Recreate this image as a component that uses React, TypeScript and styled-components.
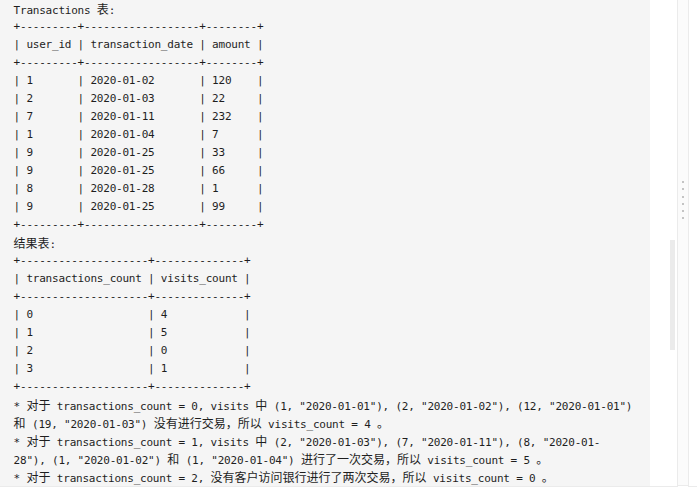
import React from "react";
import styled, { createGlobalStyle } from "styled-components";

const Global = createGlobalStyle`
  html, body { margin: 0; padding: 0; background: #ffffff; }
  #root { width: 697px; height: 488px; overflow: hidden; }
`;

const Page = styled.div`
  display: flex;
  width: 697px;
  height: 488px;
  background: #ffffff;
`;

const LeftPanel = styled.div`
  position: relative;
  display: flex;
  width: 677px;
  height: 486px;
  border-right: 1px solid #ebebeb;
  border-bottom: 1px solid #ebebeb;
  background: #ffffff;
`;

const CodeBlock = styled.pre`
  margin: 0;
  width: 650px;
  height: 486px;
  box-sizing: border-box;
  padding: 0 0 0 13.6px;
  background: #f5f5f5;
  color: #1e1e1e;
  font-family: "DejaVu Sans Mono", "Liberation Mono", monospace;
  font-size: 11px;
  letter-spacing: -0.22px;
  line-height: 18px;
  white-space: pre;
  overflow: hidden;
`;

const Line = styled.div`
  height: 18px;
`;

const Zh = styled.span`
  font-family: "Noto Sans CJK SC", sans-serif;
  font-size: 12px;
  letter-spacing: 0;
  line-height: 18px;
`;

const ScrollThumb = styled.div`
  position: absolute;
  left: 670px;
  top: 240px;
  width: 5px;
  height: 110px;
  background: #ebebeb;
`;

const Gutter = styled.div`
  width: 10px;
  height: 486px;
  display: flex;
  flex-direction: column;
  align-items: center;
  padding-top: 181px;
  box-sizing: border-box;
  gap: 5.3px;
  background: #fbfbfb;
  border-bottom: 1px solid #ebebeb;
`;

const Dot = styled.span`
  width: 2px;
  height: 2px;
  background: #c4c4c4;
`;

const RightPanel = styled.div`
  flex: 1;
  height: 486px;
  border-left: 1px solid #ebebeb;
  border-bottom: 1px solid #ebebeb;
  background: #ffffff;
`;

const CJK = /([\u3000-\u9fff\uff00-\uffef]+)/;

const render = (s: string) =>
  s.split(CJK).map((p, i) =>
    /[\u3000-\u9fff\uff00-\uffef]/.test(p) ? (
      <Zh key={i}>{p}</Zh>
    ) : (
      <React.Fragment key={i}>{p}</React.Fragment>
    )
  );

const lines: string[] = [
  "Transactions 表:",
  "+---------+------------------+--------+",
  "| user_id | transaction_date | amount |",
  "+---------+------------------+--------+",
  "| 1       | 2020-01-02       | 120    |",
  "| 2       | 2020-01-03       | 22     |",
  "| 7       | 2020-01-11       | 232    |",
  "| 1       | 2020-01-04       | 7      |",
  "| 9       | 2020-01-25       | 33     |",
  "| 9       | 2020-01-25       | 66     |",
  "| 8       | 2020-01-28       | 1      |",
  "| 9       | 2020-01-25       | 99     |",
  "+---------+------------------+--------+",
  "结果表:",
  "+--------------------+--------------+",
  "| transactions_count | visits_count |",
  "+--------------------+--------------+",
  "| 0                  | 4            |",
  "| 1                  | 5            |",
  "| 2                  | 0            |",
  "| 3                  | 1            |",
  "+--------------------+--------------+",
  '* 对于 transactions_count = 0, visits 中 (1, "2020-01-01"), (2, "2020-01-02"), (12, "2020-01-01")',
  '和 (19, "2020-01-03") 没有进行交易，所以 visits_count = 4 。',
  '* 对于 transactions_count = 1, visits 中 (2, "2020-01-03"), (7, "2020-01-11"), (8, "2020-01-',
  '28"), (1, "2020-01-02") 和 (1, "2020-01-04") 进行了一次交易，所以 visits_count = 5 。',
  "* 对于 transactions_count = 2, 没有客户访问银行进行了两次交易，所以 visits_count = 0 。",
];

export default function App() {
  return (
    <>
      <Global />
      <Page>
        <LeftPanel>
          <CodeBlock>
            {lines.map((l, i) => (
              <Line key={i}>{render(l)}</Line>
            ))}
          </CodeBlock>
          <ScrollThumb />
        </LeftPanel>
        <Gutter>
          {Array.from({ length: 6 }).map((_, i) => (
            <Dot key={i} />
          ))}
        </Gutter>
        <RightPanel />
      </Page>
    </>
  );
}
